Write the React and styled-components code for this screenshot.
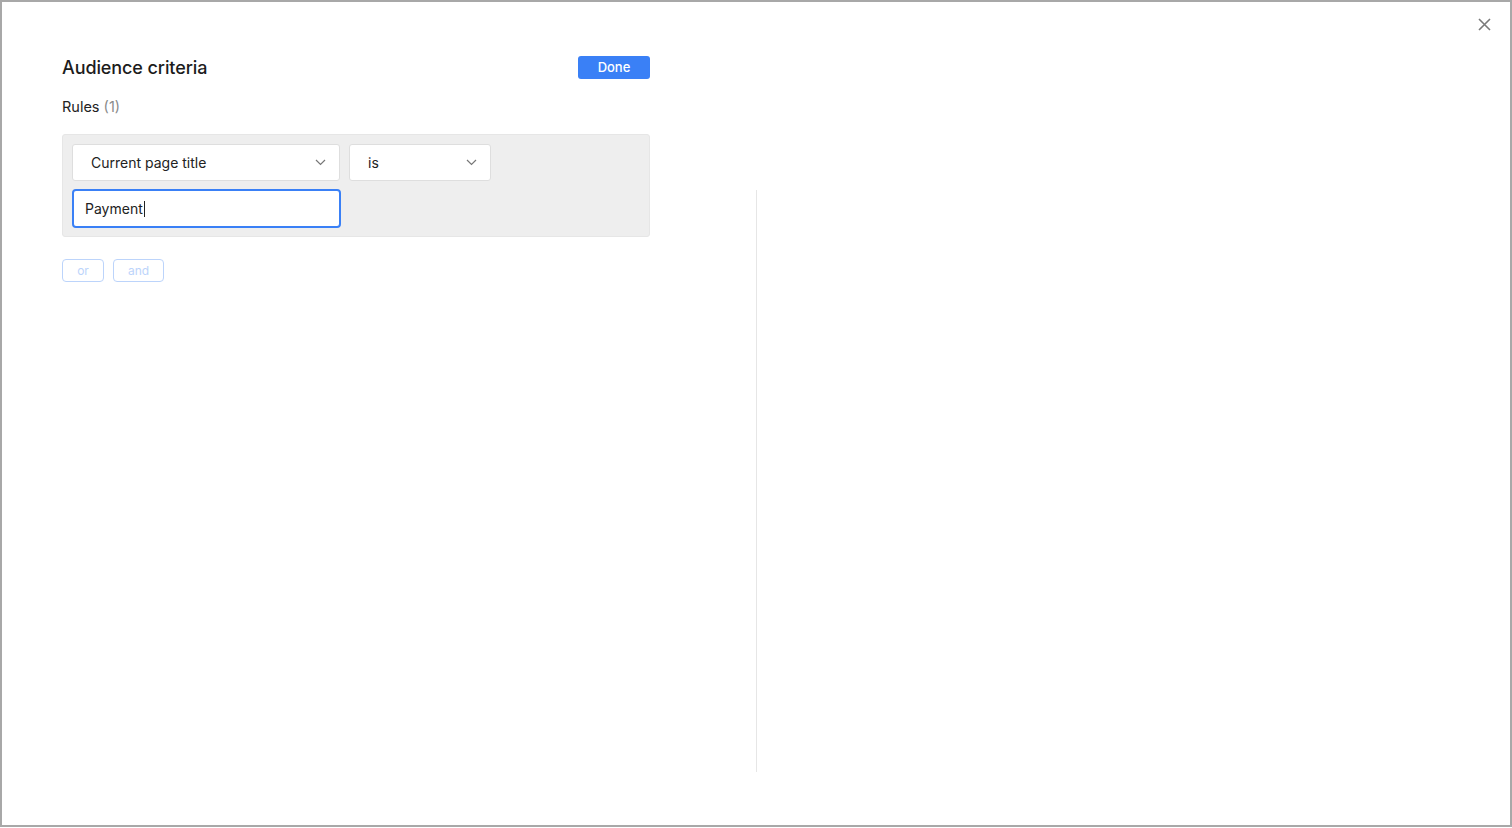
import styled, { createGlobalStyle } from 'styled-components'

const GlobalStyle = createGlobalStyle`
  html, body {
    margin: 0;
    padding: 0;
    background: #ffffff;
    font-family: Inter, "Noto Sans", sans-serif;
    color: #1f1f1f;
  }
  * { box-sizing: border-box; }
`

const Frame = styled.div`
  position: relative;
  width: 1512px;
  height: 827px;
  border: 2px solid #a8a8a8;
  background: #fff;
  display: flex;
`

const CloseButton = styled.button`
  position: absolute;
  top: 14px;
  right: 18px;
  width: 16px;
  height: 16px;
  padding: 0;
  border: none;
  background: none;
  cursor: pointer;
  display: flex;
  align-items: center;
  justify-content: center;
`

const LeftPane = styled.div`
  width: 754px;
  padding: 52px 0 0 60px;
  display: flex;
  flex-direction: column;
`

const Divider = styled.div`
  width: 1px;
  background: #e6e6e6;
  margin: 188px 0 53px 0;
`

const Content = styled.div`
  width: 588px;
  display: flex;
  flex-direction: column;
`

const Header = styled.div`
  display: flex;
  align-items: center;
  justify-content: space-between;
  height: 26px;
`

const Title = styled.h1`
  margin: 0;
  font-size: 18px;
  font-weight: 500;
  letter-spacing: -0.1px;
  color: #1c1c1c;
`

const DoneButton = styled.button`
  width: 72px;
  height: 23px;
  border: none;
  border-radius: 3px;
  background: #3a80f6;
  color: #fff;
  font-family: inherit;
  font-size: 13px;
  font-weight: 500;
  cursor: pointer;
`

const RulesLabel = styled.div`
  margin-top: 18px;
  font-size: 14.5px;
  color: #222;
  span {
    color: #8a8a8a;
  }
`

const RuleBox = styled.div`
  margin-top: 19px;
  background: #eeeeee;
  border: 1px solid #e6e6e6;
  border-radius: 3px;
  padding: 9px 9px 8px 9px;
  display: flex;
  flex-direction: column;
  gap: 8px;
`

const Row = styled.div`
  display: flex;
  gap: 9px;
`

const Select = styled.div`
  width: ${p => p.$w}px;
  height: 37px;
  background: #fff;
  border: 1px solid #dedede;
  border-radius: 3px;
  display: flex;
  align-items: center;
  justify-content: space-between;
  padding: 0 13px 0 18px;
  font-size: 14px;
  color: #222;
`

const TextInput = styled.div`
  width: 269px;
  height: 39px;
  background: #fff;
  border: 2px solid #3a80f6;
  border-radius: 4px;
  display: flex;
  align-items: center;
  padding: 0 11px;
  font-size: 14px;
  color: #222;
`

const Caret = styled.span`
  display: inline-block;
  width: 1px;
  height: 16px;
  background: #222;
  margin-left: 1px;
`

const Joiners = styled.div`
  margin-top: 22px;
  display: flex;
  gap: 9px;
`

const JoinButton = styled.button`
  width: ${p => p.$w}px;
  height: 23px;
  border: 1px solid #bcd4fb;
  border-radius: 4px;
  background: #fff;
  color: #bcd4fb;
  font-family: inherit;
  font-size: 12px;
  padding: 0;
`

const Chevron = () => (
  <svg width="11" height="7" viewBox="0 0 11 7" fill="none">
    <path d="M1 1l4.5 4.5L10 1" stroke="#777" strokeWidth="1.2" />
  </svg>
)

const App = () => (
  <>
    <GlobalStyle />
    <Frame>
      <LeftPane>
        <Content>
          <Header>
            <Title>Audience criteria</Title>
            <DoneButton>Done</DoneButton>
          </Header>
          <RulesLabel>
            Rules <span>(1)</span>
          </RulesLabel>
          <RuleBox>
            <Row>
              <Select $w={268}>
                Current page title
                <Chevron />
              </Select>
              <Select $w={142}>
                is
                <Chevron />
              </Select>
            </Row>
            <Row>
              <TextInput>
                Payment
                <Caret />
              </TextInput>
            </Row>
          </RuleBox>
          <Joiners>
            <JoinButton $w={42}>or</JoinButton>
            <JoinButton $w={51}>and</JoinButton>
          </Joiners>
        </Content>
      </LeftPane>
      <Divider />
      <CloseButton aria-label="Close">
        <svg width="13" height="13" viewBox="0 0 13 13">
          <path d="M1 1l11 11M12 1L1 12" stroke="#7a7a7a" strokeWidth="1.6" />
        </svg>
      </CloseButton>
    </Frame>
  </>
)

export default App
